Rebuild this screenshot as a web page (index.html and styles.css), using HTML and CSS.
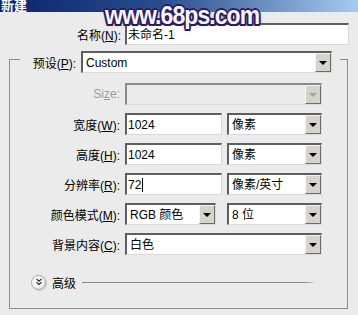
FILE: index.html
```html
<!DOCTYPE html>
<html lang="zh-CN">
  <head>
    <meta charset="UTF-8">
    <title>新建</title>
    <link rel="stylesheet" href="styles.css">
  </head>
  <body>
    <div class="titlebar"><span class="title">新建</span></div>
    <div class="watermark">www.68ps.com</div>

    <div class="dialog">
        <div class="name-row">
            <label class="lbl">名称(<u>N</u>):</label>
            <div class="field">未命名-1</div>
        </div>

        <fieldset class="group">
            <legend class="preset">
                <div class="preset-inner">
                    <label class="lbl preset-lbl">预设(<u>P</u>):</label>
                    <div class="select w-preset"><span class="val">Custom</span><span class="btn"></span></div>
                </div>
            </legend>

            <div class="form">
                <div class="row">
                    <label class="lbl muted">Si<u>z</u>e:</label>
                    <div class="select disabled w-full"><span class="val"></span><span class="btn"></span></div>
                </div>
                <div class="row">
                    <label class="lbl">宽度(<u>W</u>):</label>
                    <div class="ctrls">
                        <div class="field w-num">1024</div>
                        <div class="select w-unit"><span class="val">像素</span><span class="btn"></span></div>
                    </div>
                </div>
                <div class="row">
                    <label class="lbl">高度(<u>H</u>):</label>
                    <div class="ctrls">
                        <div class="field w-num">1024</div>
                        <div class="select w-unit"><span class="val">像素</span><span class="btn"></span></div>
                    </div>
                </div>
                <div class="row">
                    <label class="lbl">分辨率(<u>R</u>):</label>
                    <div class="ctrls">
                        <div class="field w-num">72<span class="caret"></span></div>
                        <div class="select w-unit"><span class="val">像素/英寸</span><span class="btn"></span></div>
                    </div>
                </div>
                <div class="row">
                    <label class="lbl">颜色模式(<u>M</u>):</label>
                    <div class="ctrls wide-gap">
                        <div class="select w-mode"><span class="val">RGB 颜色</span><span class="btn"></span></div>
                        <div class="select w-unit"><span class="val">8 位</span><span class="btn"></span></div>
                    </div>
                </div>
                <div class="row">
                    <label class="lbl">背景内容(<u>C</u>):</label>
                    <div class="select w-full"><span class="val">白色</span><span class="btn"></span></div>
                </div>
            </div>

            <div class="adv">
                <span class="adv-icon">
                    <svg width="8" height="8" viewBox="0 0 8 8">
                        <path d="M1.5 1 L4 3.2 L6.5 1 M1.5 4.3 L4 6.5 L6.5 4.3" fill="none" stroke="#333" stroke-width="1.3"/>
                    </svg>
                </span>
                <span class="adv-text">高级</span>
                <span class="adv-line"></span>
            </div>
        </fieldset>
    </div>
  </body>
</html>
```

FILE: styles.css
```css
* {
    box-sizing: border-box;
}

body {
    width: 358px;
    height: 315px;
    margin: 0;
    position: relative;
    overflow: hidden;
    background: #ebebeb;
    color: #000;
    font-family: "Liberation Sans", "Noto Sans CJK SC", sans-serif;
    font-size: 12px;
}

u {
    text-decoration: underline;
    text-underline-offset: 1px;
}

.titlebar {
    height: 12px;
    overflow: hidden;
    background: linear-gradient(to right, #0a246a 0%, #2a4d8e 45%, #a6caf0 100%);
}

.title {
    display: block;
    margin-top: -2px;
    padding-left: 1px;
    color: #fff;
    font-family: "Noto Sans CJK SC", sans-serif;
    font-weight: 700;
    font-size: 13px;
    line-height: 13px;
}

.watermark {
    position: absolute;
    left: 105px;
    top: 1px;
    z-index: 2;
    color: #f6f4ff;
    font-family: "Liberation Sans", sans-serif;
    font-weight: 700;
    font-size: 25px;
    letter-spacing: -1px;
    transform: scaleX(0.92);
    transform-origin: left center;
    text-shadow:
        2px 0 0 #2b1d5a, -2px 0 0 #2b1d5a, 0 2px 0 #2b1d5a, 0 -2px 0 #2b1d5a,
        1.5px 1.5px 0 #2b1d5a, -1.5px 1.5px 0 #2b1d5a, 1.5px -1.5px 0 #2b1d5a, -1.5px -1.5px 0 #2b1d5a,
        0 0 4px #6d5fa0;
}

.dialog {
    padding-top: 11px;
}

.lbl {
    text-align: right;
    white-space: nowrap;
}

.muted {
    color: #9c9c9c;
}

.name-row {
    display: grid;
    grid-template-columns: 121px 224px;
    column-gap: 4px;
    align-items: center;
}

.field,
.select {
    height: 22px;
    display: flex;
    align-items: center;
    background: #fff;
    border-style: solid;
    border-width: 2px 1px 1px 2px;
    border-color: #5e5e5e #d9d9d9 #d9d9d9 #5e5e5e;
    line-height: 1;
    white-space: nowrap;
}

.field {
    padding-left: 1px;
}

.select {
    padding-left: 3px;
}

.select .val {
    flex: 1;
}

.select.disabled {
    background: #ebebeb;
    border-color: #8a8a8a #d9d9d9 #d9d9d9 #8a8a8a;
}

.btn {
    width: 16px;
    align-self: stretch;
    display: flex;
    align-items: center;
    justify-content: center;
    background: #d6d3cc;
    border: 1px solid;
    border-color: #f6f6f6 #6c6c6c #6c6c6c #f6f6f6;
}

.btn::after {
    content: "";
    border-left: 4px solid transparent;
    border-right: 4px solid transparent;
    border-top: 4px solid #000;
}

.disabled .btn::after {
    border-top-color: #a4a4a4;
}

.caret {
    width: 1px;
    height: 14px;
    margin-left: 1px;
    background: #000;
}

.group {
    margin: 0 10px 0 9px;
    padding: 0 0 19px;
    min-width: 0;
    border: 1px solid #8e8e8e;
}

.preset {
    margin-left: 10px;
    padding: 6px 8px 0 0;
    width: 320px;
}

.preset-inner {
    display: flex;
    align-items: center;
}

.preset-lbl {
    width: 56px;
    margin-right: 5px;
}

.w-preset {
    width: 251px;
}

.form {
    display: flex;
    flex-direction: column;
    gap: 8px;
    margin-top: 10px;
}

.row {
    display: grid;
    grid-template-columns: 110px auto;
    column-gap: 5px;
    align-items: center;
}

.ctrls {
    display: flex;
    gap: 5px;
}

.ctrls.wide-gap {
    gap: 11px;
}

.w-full {
    width: 197px;
}

.w-num {
    width: 97px;
}

.w-unit {
    width: 95px;
}

.w-mode {
    width: 91px;
}

.adv {
    display: flex;
    align-items: center;
    height: 14px;
    margin-top: 20px;
    padding: 0 33px 0 21px;
}

.adv-icon {
    width: 15px;
    height: 15px;
    flex: none;
    display: flex;
    align-items: center;
    justify-content: center;
    border: 1px solid #a9a9a9;
    border-radius: 50%;
    background: radial-gradient(circle at 40% 35%, #ffffff 30%, #d8d8d8 100%);
    box-shadow: 1px 1px 1px rgba(0, 0, 0, 0.15);
}

.adv-text {
    margin-left: 6px;
}

.adv-line {
    flex: 1;
    height: 1px;
    margin-left: 6px;
    background: linear-gradient(to right, #8a8a8a 96%, #d4d4d4 100%);
}
```
